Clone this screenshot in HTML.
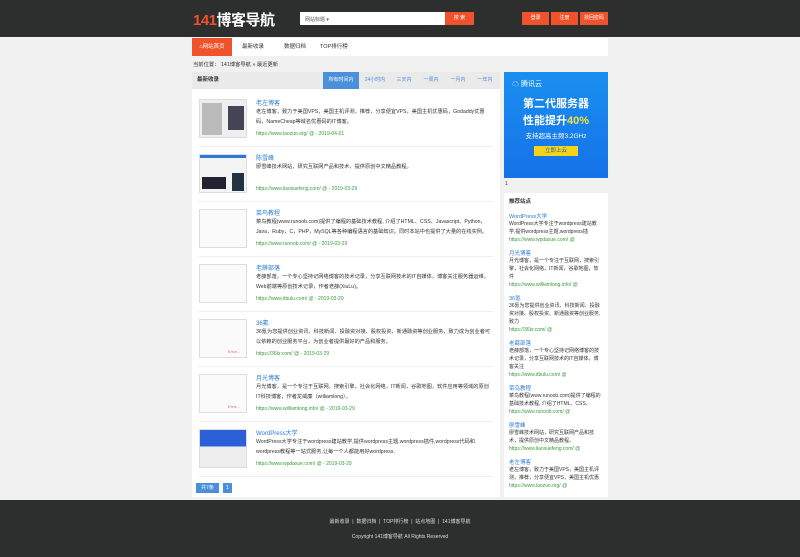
<!DOCTYPE html><html><head><meta charset="utf-8"><style>
*{margin:0;padding:0;box-sizing:border-box}
body{width:800px;height:557px;background:#f1f1f1;font-family:"Liberation Sans","Noto Sans CJK SC",sans-serif;font-size:5.5px;color:#333;position:relative;overflow:hidden}
.hd{position:absolute;left:0;top:0;width:800px;height:37px;background:#2d2f2e}
.logo{position:absolute;left:193px;top:9px;font-size:15px;font-weight:bold;color:#fff;letter-spacing:-0.5px}
.logo b{color:#f0532c}
.sch{position:absolute;left:300px;top:12px;width:145px;height:13px;background:#fff;font-size:5px;padding:4px 5px;color:#555}
.sbtn{position:absolute;left:445px;top:12px;width:29px;height:13px;background:#f0532c;color:#fff;font-size:5px;text-align:center;line-height:13px}
.rb{position:absolute;top:12px;height:13px;background:#f0532c;color:#fff;font-size:5px;text-align:center;line-height:13px}
.nav{position:absolute;left:192px;top:38px;width:416px;height:18px;background:#fff}
.nav span{position:absolute;top:0;line-height:18px;font-size:5.5px;color:#333}
.crumb{position:absolute;left:193px;top:60px;font-size:5.3px}
.main{position:absolute;left:192px;top:72px;width:308px;height:425px;background:#fff}
.tabs{position:absolute;left:0;top:0;width:308px;height:17px;background:#eaeaea}
.tabs .t{position:absolute;top:0;height:17px;line-height:17px;font-size:5px;color:#4a8fd8;text-align:center;width:26px}
.item{position:absolute;left:7px;width:294px;height:55px;border-bottom:1px solid #eee}
.th{position:absolute;left:0;top:7px;width:48px;height:39px;background:#e8e8e8;border:1px solid #ddd;overflow:hidden}
.th i{position:absolute;right:6px;bottom:3px;font-style:normal;font-size:4px;color:#e66}
.it{position:absolute;left:57px;top:6px;font-size:6px;color:#2b7bd4}
.ds{position:absolute;left:57px;top:16px;width:236px;line-height:9.5px;font-size:5.2px;color:#333}
.u{position:absolute;left:57px;font-size:5px;color:#3a9a3a}
.side{position:absolute;left:504px;top:72px;width:104px;height:106px;background:linear-gradient(#1a8ff0,#1572e8);color:#fff;text-align:center}
.rec{position:absolute;left:504px;top:193px;width:104px;height:304px;background:#fff}
.rec .n{font-size:5.5px;color:#2b7bd4;margin-top:5px}
.rec .d{font-size:5px;line-height:8px}
.rec .l{font-size:5px;color:#3a9a3a;line-height:8px}
.ft{position:absolute;left:0;top:500px;width:800px;height:57px;background:#2d2f2e;color:#ddd;text-align:center;font-size:5px}
</style></head><body>
<div class="hd"></div>
<div class="logo"><b>141</b>博客导航</div>
<div class="sch">网站标题 ▾</div><div class="sbtn">搜 索</div>
<div class="rb" style="left:522px;width:27px">登录</div>
<div class="rb" style="left:551px;width:27px">注册</div>
<div class="rb" style="left:580px;width:28px">找回密码</div>
<div class="nav">
<span style="left:0;width:40px;height:18px;background:#f0532c;color:#fff;text-align:center">⌂网站首页</span>
<span style="left:50px">最新收录</span><span style="left:92px">数据归档</span><span style="left:128px">TOP排行榜</span></div>
<div class="crumb">当前位置： 141博客导航 » 最近更新</div>
<div class="main">
<div class="tabs"><span style="position:absolute;left:5px;top:0;line-height:17px;font-weight:bold">最新收录</span>
<div class="t" style="left:131px;width:36px;background:#4a8fd8;color:#fff">所有时间内</div>
<div class="t" style="left:170px">24小时内</div><div class="t" style="left:199px">三天内</div><div class="t" style="left:226px">一周内</div><div class="t" style="left:253px">一月内</div><div class="t" style="left:280px">一年内</div></div>
<div class="item" style="top:20px"><div class="th" style="background:#eee"><div style="position:absolute;left:2px;top:3px;width:20px;height:32px;background:#bbb"></div><div style="position:absolute;left:28px;top:6px;width:16px;height:24px;background:#445"></div></div><div class="it">老左博客</div><div class="ds">老左博客，致力于美国VPS，美国主机评测，推荐，分享便宜VPS，美国主机优惠码，Godaddy优惠码，NameCheap等域名优惠码的IT博客。</div><div class="u" style="top:39px">https://www.laozuo.org/ @ - 2019-04-01</div></div>
<div class="item" style="top:75px"><div class="th" style="background:#f4f4f4"><div style="position:absolute;left:0;top:0;width:48px;height:3px;background:#2a7bd8"></div><div style="position:absolute;left:2px;top:22px;width:24px;height:12px;background:#223"></div><div style="position:absolute;left:32px;top:18px;width:12px;height:18px;background:#234"></div></div><div class="it">陈雪峰</div><div class="ds">廖雪峰技术网站，研究互联网产品和技术，提供原创中文精品教程。</div><div class="u" style="top:39px">https://www.liaoxuefeng.com/ @ - 2019-03-29</div></div>
<div class="item" style="top:130px"><div class="th" style="background:#fafafa"></div><div class="it">菜鸟教程</div><div class="ds">菜鸟教程(www.runoob.com)提供了编程的基础技术教程, 介绍了HTML、CSS、Javascript、Python，Java，Ruby，C，PHP，MySQL等各种编程语言的基础知识。同时本站中也提供了大量的在线实例。</div><div class="u" style="top:39px">https://www.runoob.com/ @ - 2019-03-29</div></div>
<div class="item" style="top:185px"><div class="th" style="background:#fafafa"></div><div class="it">老薛部落</div><div class="ds">老薛部落，一个专心坚持记网络博客的技术记录，分享互联网技术的IT自媒体，博客关注服务器运维，Web前端等原创技术记录，作者老薛(XiuLu)。</div><div class="u" style="top:39px">https://www.itbulu.com/ @ - 2019-03-29</div></div>
<div class="item" style="top:240px"><div class="th" style="background:#fafafa"><i>Error...</i></div><div class="it">36氪</div><div class="ds">36氪为您提供创业资讯、科技新闻、投融资对接、股权投资、新通融资等创业服务，致力成为创业者可以依赖的创业服务平台，为创业者提供最好的产品和服务。</div><div class="u" style="top:39px">https://36kr.com/ @ - 2019-03-29</div></div>
<div class="item" style="top:295px"><div class="th" style="background:#fafafa"><i>Error...</i></div><div class="it">月光博客</div><div class="ds">月光博客，是一个专注于互联网，搜索引擎，社会化网络，IT新闻，谷歌地图，软件应用等领域的原创IT科技博客，作者龙威廉（williamlong）。</div><div class="u" style="top:39px">https://www.williamlong.info/ @ - 2019-03-29</div></div>
<div class="item" style="top:350px"><div class="th" style="background:linear-gradient(#2a5fd8 45%,#eee 45%)"></div><div class="it">WordPress大学</div><div class="ds">WordPress大学专注于wordpress建站教学,提供wordpress主题,wordpress插件,wordpress代码和wordpress教程等一站式服务,让每一个人都能用好wordpress.</div><div class="u" style="top:39px">https://www.wpdaxue.com/ @ - 2019-03-29</div></div>
<div style="position:absolute;left:4px;top:411px;width:23px;height:10px;background:#4a8fd8;color:#fff;font-size:5px;text-align:center;line-height:10px">共7条</div>
<div style="position:absolute;left:31px;top:411px;width:9px;height:10px;background:#4a8fd8;color:#fff;font-size:5px;text-align:center;line-height:10px">1</div>
</div>
<div class="side"><div style="text-align:left;padding:7px 0 0 8px;font-size:7px">☁ 腾讯云</div>
<div style="font-size:11px;font-weight:bold;margin-top:6px">第二代服务器</div>
<div style="font-size:11px;font-weight:bold;margin-top:1px">性能提升<span style="color:#f5e23a">40%</span></div>
<div style="font-size:6.5px;margin-top:2px">支持超高主频3.2GHz</div>
<div style="margin:6px auto 0;width:44px;height:10px;background:#f8d416;color:#1565c0;font-size:5.5px;line-height:10px">立即上云</div></div>
<div style="position:absolute;left:505px;top:181px;font-size:5px">1</div>
<div class="rec" style="padding:4px 5px">
<div style="font-weight:bold;font-size:5.5px;margin-bottom:7px">推荐站点</div>
<div class="n">WordPress大学</div><div class="d">WordPress大学专注于wordpress建站教学,提供wordpress主题,wordpress插</div><div class="l">https://www.wpdaxue.com/ @</div>
<div class="n">月光博客</div><div class="d">月光博客，是一个专注于互联网，搜索引擎，社会化网络，IT新闻，谷歌地图，软件</div><div class="l">https://www.williamlong.info/ @</div>
<div class="n">36氪</div><div class="d">36氪为您提供创业资讯、科技新闻、投融资对接、股权投资、新通融资等创业服务,致力</div><div class="l">https://36kr.com/ @</div>
<div class="n">老薛部落</div><div class="d">老薛部落，一个专心坚持记网络博客的技术记录，分享互联网技术的IT自媒体，博客关注</div><div class="l">https://www.itbulu.com/ @</div>
<div class="n">菜鸟教程</div><div class="d">菜鸟教程(www.runoob.com)提供了编程的基础技术教程, 介绍了HTML、CSS、</div><div class="l">https://www.runoob.com/ @</div>
<div class="n">廖雪峰</div><div class="d">廖雪峰技术网站，研究互联网产品和技术，提供原创中文精品教程。</div><div class="l">https://www.liaoxuefeng.com/ @</div>
<div class="n">老左博客</div><div class="d">老左博客，致力于美国VPS，美国主机评测，推荐，分享便宜VPS，美国主机优惠</div><div class="l">https://www.laozuo.org/ @</div>
</div>
<div class="ft"><div style="margin-top:18px">最新收录 &nbsp;|&nbsp; 数据归档 &nbsp;|&nbsp; TOP排行榜 &nbsp;|&nbsp; 站点地图 &nbsp;|&nbsp; 141博客导航</div><div style="margin-top:8px">Copyright 141博客导航 All Rights Reserved</div></div>
</body></html>
